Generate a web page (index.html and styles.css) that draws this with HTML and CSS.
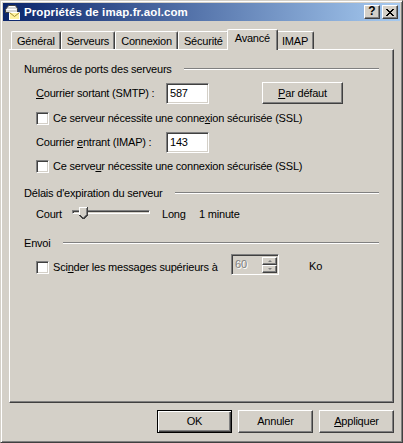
FILE: index.html
```html
<!DOCTYPE html>
<html lang="fr">
<head>
<meta charset="utf-8">
<title>Propriétés de imap.fr.aol.com</title>
<link rel="stylesheet" href="styles.css">
</head>
<body>
<div class="window">
  <div class="titlebar">
    <svg class="app-icon" width="16" height="16" viewBox="0 0 16 16">
      <path d="M0.5 5.5 L3.5 1.5 H10.5 L12.5 4.5 V8.5 H0.5 Z" fill="#d6d6d6" stroke="#404040"/>
      <path d="M1.5 5.5 H11.5" stroke="#ffffff"/>
      <path d="M4 2.5 H10" stroke="#ffffff"/>
      <rect x="4.5" y="8.5" width="10" height="7" fill="#fff3a0" stroke="#ffffff"/>
      <path d="M4.5 8.5 L9.5 12.5 L14.5 8.5" fill="none" stroke="#a08a30"/>
    </svg>
    <span class="title">Propriétés de imap.fr.aol.com</span>
    <div class="caption-buttons">
      <span class="cap-btn help">?</span>
      <span class="cap-btn close">
        <svg width="8" height="7" viewBox="0 0 8 7" shape-rendering="crispEdges">
          <polygon points="0,0 2,0 8,7 6,7" fill="#000"/>
          <polygon points="6,0 8,0 2,7 0,7" fill="#000"/>
        </svg>
      </span>
    </div>
  </div>

  <div class="client">
    <div class="tabs">
      <span class="tab">Général</span>
      <span class="tab">Serveurs</span>
      <span class="tab">Connexion</span>
      <span class="tab">Sécurité</span>
      <span class="tab active">Avancé</span>
      <span class="tab">IMAP</span>
    </div>

    <div class="panel">
      <div class="group-header"><span>Numéros de ports des serveurs</span><span class="etch"></span></div>

      <div class="port-row first">
        <span class="port-label"><u>C</u>ourrier sortant (SMTP) :</span>
        <span class="field">587</span>
        <span class="button wide"><span><u>P</u>ar défaut</span></span>
      </div>
      <div class="check-row">
        <span class="checkbox"></span>
        <span>Ce serveur nécessite une conne<u>x</u>ion sécurisée (SSL)</span>
      </div>

      <div class="port-row second">
        <span class="port-label">Courrier <u>e</u>ntrant (IMAP) :</span>
        <span class="field">143</span>
      </div>
      <div class="check-row last">
        <span class="checkbox"></span>
        <span>Ce serve<u>u</u>r nécessite une connexion sécurisée (SSL)</span>
      </div>

      <div class="group-header timeout"><span>Délais d'expiration du serveur</span><span class="etch"></span></div>

      <div class="slider-row">
        <span class="tick-label court">Court</span>
        <div class="slider">
          <div class="track"></div>
          <svg class="thumb" width="9" height="12" viewBox="0 0 9 12" shape-rendering="crispEdges">
            <polygon points="0,0 9,0 9,8 4.5,12 0,8" fill="#d4d0c8"/>
            <polyline points="0.5,8 0.5,0.5 8,0.5" fill="none" stroke="#ffffff"/>
            <polyline points="8.5,0 8.5,8.2 4.5,11.8 0.5,8.2" fill="none" stroke="#404040"/>
            <polyline points="7.5,1 7.5,7.8 4.5,10.6" fill="none" stroke="#808080"/>
          </svg>
        </div>
        <span class="tick-label long">Long</span>
        <span class="tick-label">1 minute</span>
      </div>

      <div class="group-header send"><span>Envoi</span><span class="etch"></span></div>

      <div class="split-row">
        <span class="split-label">
          <span class="checkbox"></span>
          <span>Sci<u>n</u>der les messages supérieurs à</span>
        </span>
        <span class="spinner">
          <span class="spin-value">60</span>
          <span class="spin-buttons">
            <span class="spin-btn"><span class="arrow up"></span></span>
            <span class="spin-btn"><span class="arrow down"></span></span>
          </span>
        </span>
        <span class="unit">Ko</span>
      </div>
    </div>

    <div class="actions">
      <span class="button default">OK</span>
      <span class="button">Annuler</span>
      <span class="button"><span><u>A</u>ppliquer</span></span>
    </div>
  </div>
</div>
</body>
</html>
```

FILE: styles.css
```css
* {
  box-sizing: border-box;
}

html, body {
  margin: 0;
  padding: 0;
}

body {
  background: #d4d0c8;
  font-family: "Liberation Sans", Arial, sans-serif;
  font-size: 11px;
  letter-spacing: -0.2px;
  color: #000;
  line-height: 13px;
}

u {
  text-decoration: underline;
  text-underline-offset: 1px;
}

.window {
  width: 403px;
  height: 443px;
  border: 1px solid;
  border-color: #d4d0c8 #404040 #404040 #d4d0c8;
  box-shadow: inset 1px 1px #ffffff, inset -1px -1px #808080;
  padding: 2px;
  background: #d4d0c8;
  display: flex;
  flex-direction: column;
}

/* ---------- title bar ---------- */
.titlebar {
  height: 18px;
  flex: none;
  background: linear-gradient(to right, #0a246a, #a6caf0);
  display: flex;
  align-items: center;
  padding: 0 2px;
  color: #ffffff;
}

.app-icon {
  flex: none;
  margin-right: 3px;
}

.title {
  flex: 1;
  font-weight: bold;
  font-size: 11.5px;
  letter-spacing: 0.1px;
  white-space: nowrap;
}

.caption-buttons {
  display: flex;
  gap: 2px;
}

.cap-btn {
  width: 16px;
  height: 14px;
  background: #d4d0c8;
  border: 1px solid;
  border-color: #ffffff #404040 #404040 #ffffff;
  box-shadow: inset -1px -1px #808080;
  display: flex;
  align-items: center;
  justify-content: center;
  color: #000;
  font-weight: bold;
  font-size: 12px;
  letter-spacing: 0;
}

.cap-btn.help {
  padding-bottom: 1px;
}

/* ---------- client ---------- */
.client {
  flex: 1;
  padding: 8px 6px 0;
  display: flex;
  flex-direction: column;
}

.tabs {
  display: flex;
  height: 20px;
  padding-left: 2px;
  align-items: flex-end;
}

.tab {
  height: 18px;
  padding: 3px 5px 0;
  border-top: 1px solid #ffffff;
  border-left: 1px solid #ffffff;
  border-right: 1px solid #404040;
  box-shadow: inset -1px 0 #808080;
  border-radius: 2px 2px 0 0;
  white-space: nowrap;
}

.tab.active {
  height: 21px;
  margin: 0 -2px -1px;
  padding: 2px 7px 0;
  position: relative;
  z-index: 1;
  background: #d4d0c8;
}

.panel {
  height: 354px;
  flex: none;
  border: 1px solid;
  border-color: #ffffff #404040 #404040 #ffffff;
  box-shadow: inset -1px -1px #808080;
  padding: 13px 14px 0;
}

/* ---------- groups ---------- */
.group-header {
  display: flex;
  height: 13px;
  white-space: nowrap;
}

.group-header .etch {
  flex: 1;
  height: 2px;
  margin: 5px 0 0 12px;
  border-top: 1px solid #808080;
  border-bottom: 1px solid #ffffff;
}

.group-header.timeout {
  margin-top: 14px;
}

.group-header.send {
  margin-top: 16px;
}

.port-row {
  display: flex;
  align-items: center;
  height: 22px;
  padding-left: 12px;
}

.port-row.first {
  margin-top: 6px;
}

.port-row.second {
  margin-top: 6px;
}

.port-label {
  width: 130px;
  white-space: nowrap;
}

.field {
  width: 43px;
  height: 21px;
  background: #ffffff;
  border: 1px solid;
  border-color: #808080 #ffffff #ffffff #808080;
  box-shadow: inset 1px 1px #404040, inset -1px -1px #d4d0c8;
  padding: 3px 0 0 3px;
}

.button {
  width: 75px;
  height: 23px;
  background: #d4d0c8;
  border: 1px solid;
  border-color: #ffffff #404040 #404040 #ffffff;
  box-shadow: inset -1px -1px #808080;
  display: flex;
  align-items: center;
  justify-content: center;
  white-space: nowrap;
}

.button.wide {
  width: 81px;
  height: 22px;
  margin-left: 53px;
}

.button.default {
  border-color: #000;
  box-shadow: inset 1px 1px #ffffff, inset -1px -1px #404040, inset -2px -2px #808080;
}

.check-row {
  display: flex;
  align-items: center;
  gap: 4px;
  height: 13px;
  padding-left: 12px;
  margin-top: 8px;
  white-space: nowrap;
}

.check-row.last {
  margin-top: 7px;
}

.checkbox {
  flex: none;
  width: 13px;
  height: 13px;
  background: #ffffff;
  border: 1px solid;
  border-color: #808080 #ffffff #ffffff #808080;
  box-shadow: inset 1px 1px #404040, inset -1px -1px #d4d0c8;
}

/* ---------- slider ---------- */
.slider-row {
  display: flex;
  align-items: flex-start;
  height: 14px;
  margin-top: 7px;
  padding-left: 12px;
}

.tick-label {
  margin-top: 1px;
  white-space: nowrap;
}

.tick-label.court {
  width: 34px;
}

.tick-label.long {
  width: 37px;
  margin-left: 10px;
}

.slider {
  position: relative;
  width: 82px;
  height: 12px;
  padding: 3px 2px 0;
}

.track {
  height: 4px;
  border: 1px solid;
  border-color: #808080 #ffffff #ffffff #808080;
  box-shadow: inset 1px 1px #404040;
}

.thumb {
  position: absolute;
  left: 9px;
  top: 0;
}

/* ---------- split ---------- */
.split-row {
  display: flex;
  align-items: flex-start;
  height: 21px;
  margin-top: 4px;
  padding-left: 12px;
}

.split-label {
  width: 195px;
  display: flex;
  align-items: center;
  gap: 4px;
  margin-top: 7px;
  white-space: nowrap;
}

.spinner {
  width: 48px;
  height: 21px;
  display: flex;
  border: 1px solid;
  border-color: #808080 #ffffff #ffffff #808080;
  box-shadow: inset 1px 1px #404040, inset -1px -1px #d4d0c8;
  padding: 2px 1px 1px 2px;
}

.spin-value {
  flex: 1;
  padding: 1px 0 0 1px;
  color: #808080;
  text-shadow: 1px 1px #ffffff;
}

.spin-buttons {
  width: 15px;
  display: flex;
  flex-direction: column;
}

.spin-btn {
  flex: 1;
  border: 1px solid;
  border-color: #ffffff #404040 #404040 #ffffff;
  box-shadow: inset -1px -1px #808080;
  display: flex;
  align-items: center;
  justify-content: center;
}

.arrow {
  width: 0;
  height: 0;
  border-left: 2px solid transparent;
  border-right: 2px solid transparent;
}

.arrow.up {
  border-bottom: 2px solid #808080;
}

.arrow.down {
  border-top: 2px solid #808080;
}

.unit {
  margin: 6px 0 0 30px;
}

/* ---------- actions ---------- */
.actions {
  display: flex;
  justify-content: flex-end;
  gap: 6px;
  margin-top: 7px;
}
```
